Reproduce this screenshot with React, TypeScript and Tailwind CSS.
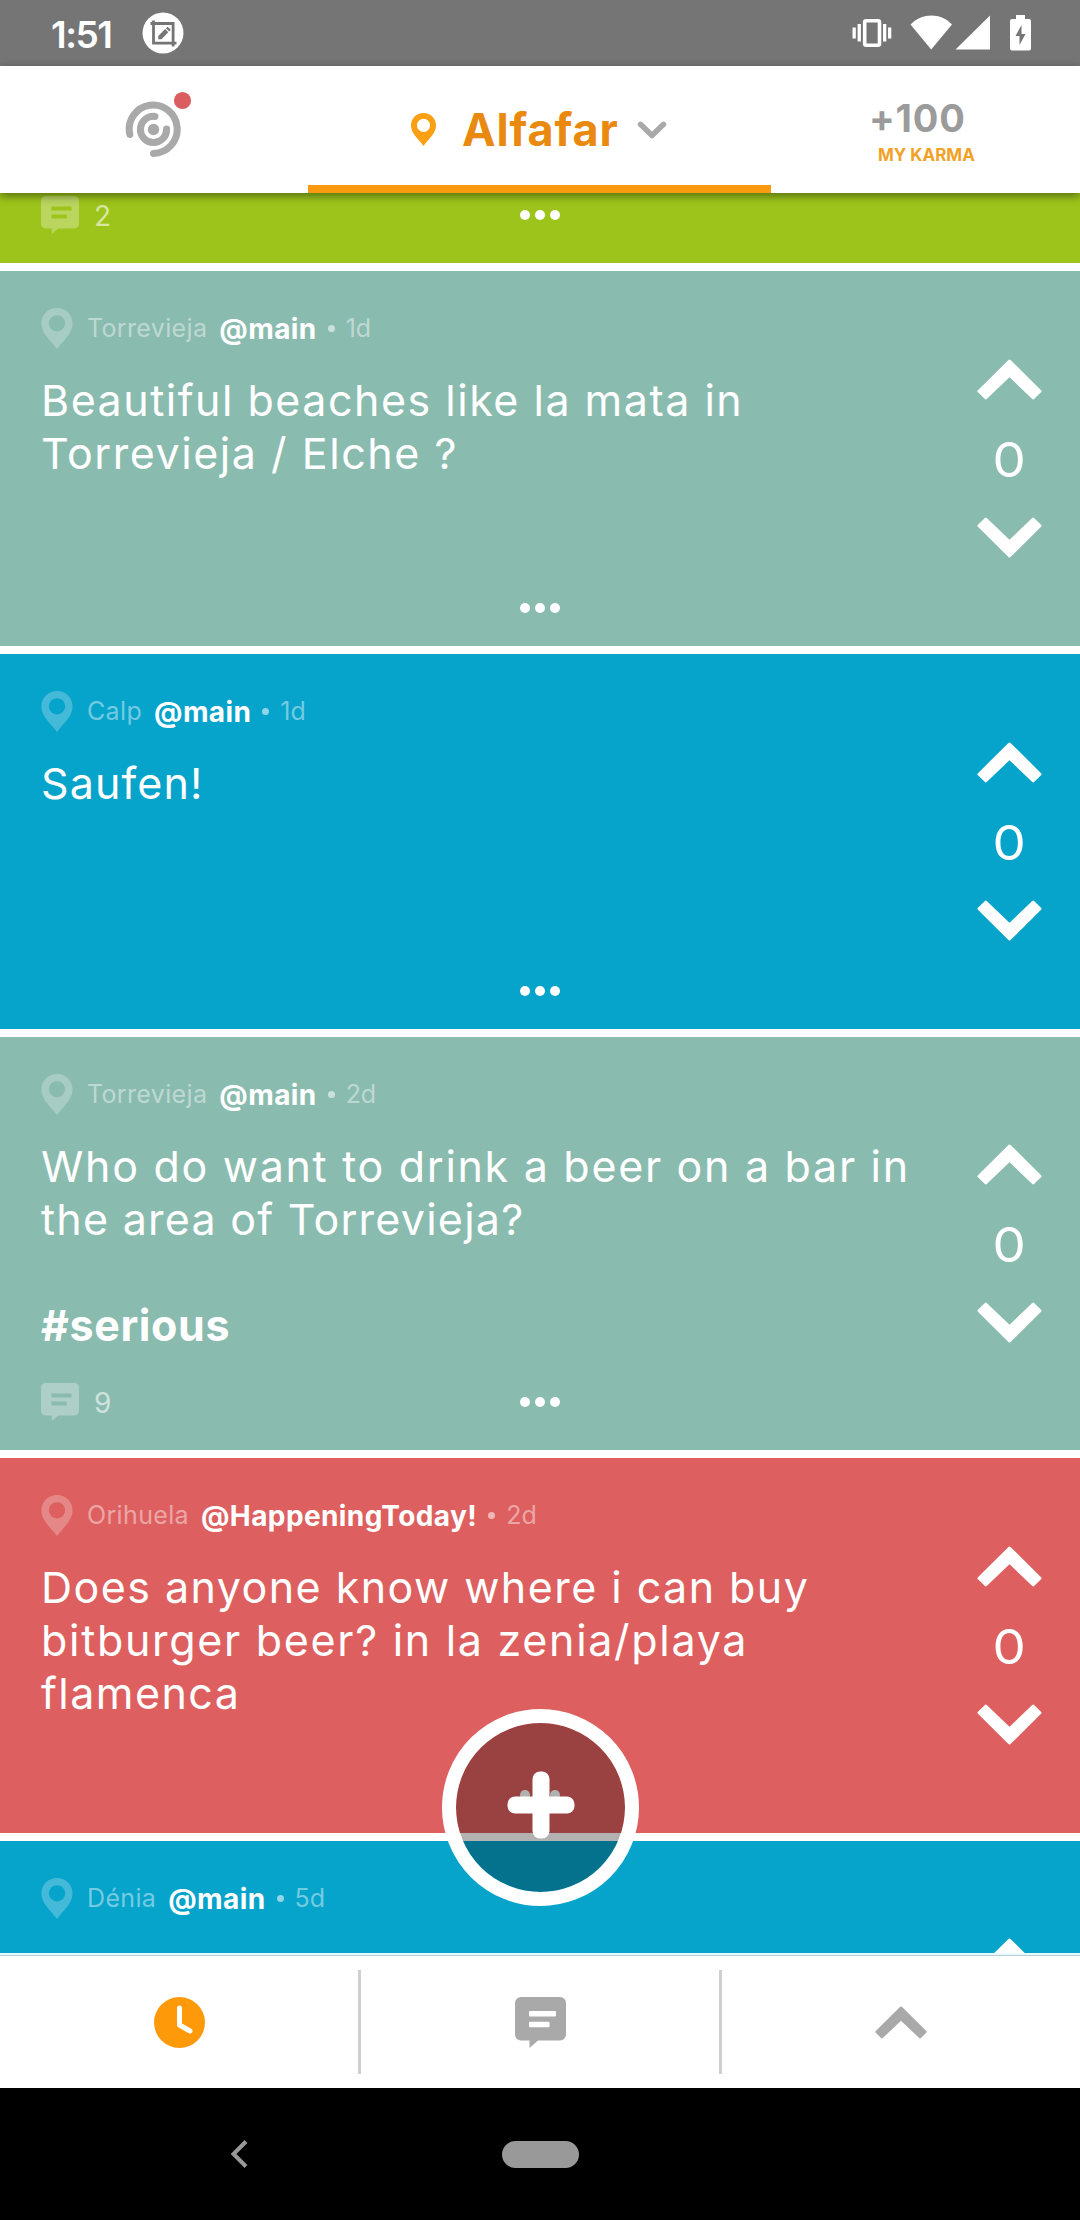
import clsx from "clsx";

type Line = { text: string; tracking: string; bold?: boolean };

type Post = {
  id: number;
  color: string;
  height: string;
  place?: string;
  channel?: string;
  age?: string;
  lines: Line[];
  replies?: number;
  votes?: number;
  canVote: boolean;
};

const posts: Post[] = [
  { id: 1, color: "bg-[#9dc41a]", height: "h-[70px]", lines: [], replies: 2, canVote: false },
  {
    id: 2,
    color: "bg-[#8abbaf]",
    height: "h-[375px]",
    place: "Torrevieja",
    channel: "@main",
    age: "1d",
    lines: [
      { text: "Beautiful beaches like la mata in", tracking: "tracking-[1.5px]" },
      { text: "Torrevieja / Elche ?", tracking: "tracking-[1.55px]" },
    ],
    votes: 0,
    canVote: true,
  },
  {
    id: 3,
    color: "bg-[#06a3cb]",
    height: "h-[375px]",
    place: "Calp",
    channel: "@main",
    age: "1d",
    lines: [{ text: "Saufen!", tracking: "tracking-[1.1px]" }],
    votes: 0,
    canVote: true,
  },
  {
    id: 4,
    color: "bg-[#8abbaf]",
    height: "h-[413px]",
    place: "Torrevieja",
    channel: "@main",
    age: "2d",
    lines: [
      { text: "Who do want to drink a beer on a bar in", tracking: "tracking-[1.7px]" },
      { text: "the area of Torrevieja?", tracking: "tracking-[1.25px]" },
      { text: "", tracking: "" },
      { text: "#serious", tracking: "tracking-[0.6px]", bold: true },
    ],
    replies: 9,
    votes: 0,
    canVote: true,
  },
  {
    id: 5,
    color: "bg-[#dd5f5f]",
    height: "h-[375px]",
    place: "Orihuela",
    channel: "@HappeningToday!",
    age: "2d",
    lines: [
      { text: "Does anyone know where i can buy", tracking: "tracking-[1.45px]" },
      { text: "bitburger beer? in la zenia/playa", tracking: "tracking-[1.7px]" },
      { text: "flamenca", tracking: "tracking-[1.45px]" },
    ],
    votes: 0,
    canVote: true,
  },
  {
    id: 6,
    color: "bg-[#06a3cb]",
    height: "h-[393px]",
    place: "Dénia",
    channel: "@main",
    age: "5d",
    lines: [],
    canVote: true,
  },
];

function Chevron({ className }: { className?: string }) {
  return (
    <svg viewBox="0 0 65 41" className={className} fill="currentColor" stroke="currentColor" strokeWidth="3" strokeLinejoin="round">
      <path d="M32.5 2 L63 32.2 L56.3 38.8 L32.5 16.2 L8.7 38.8 L2 32.2 Z" />
    </svg>
  );
}

function Pin({ className }: { className?: string }) {
  return (
    <svg viewBox="0 0 32 42" className={className} fill="currentColor" fillRule="evenodd">
      <path d="M16 0C7 0 0 7 0 16c0 9.500 8.500 16.500 16 26 7.500-9.500 16-16.500 16-26C32 7 25 0 16 0Zm0 7.300a8.400 8.400 0 1 1 0 16.800 8.400 8.400 0 0 1 0-16.800Z" />
    </svg>
  );
}

function Bubble({ className }: { className?: string }) {
  return (
    <svg viewBox="0 0 51 51" className={className} fill="currentColor" fillRule="evenodd">
      <path d="M6 0h39a6 6 0 0 1 6 6v31.500a6 6 0 0 1-6 6H23L14.500 51v-7.500H6a6 6 0 0 1-6-6V6a6 6 0 0 1 6-6Zm9 14a1 1 0 0 0-1 1v3.500a1 1 0 0 0 1 1h25a1 1 0 0 0 1-1V15a1 1 0 0 0-1-1Zm0 10.700a1 1 0 0 0-1 1v3.500a1 1 0 0 0 1 1h18.500a1 1 0 0 0 1-1v-3.500a1 1 0 0 0-1-1Z" />
    </svg>
  );
}

function StatusBar() {
  return (
    <div className="flex h-[66px] shrink-0 items-center bg-[#757575] pl-[51px] pr-[47px] text-white">
      <span className="w-[91px] pt-[3px] text-[37px] font-semibold leading-none tracking-[-1.5px]">1:51</span>
      <svg viewBox="0 0 42 42" className="h-[42px] w-[42px]" fill="none">
        <circle cx="21" cy="21" r="20.500" fill="#fff" />
        <g stroke="#757575" strokeWidth="2.800">
          <path d="M8.500 11.500h22.600v23M11.500 8.500v22.700h23" />
        </g>
        <path d="M16.300 27.200v-3.300l6.800-6.800 3.200 3.200-6.800 6.900ZM24 16.200l1.600-1.500 3.100 3.100-1.500 1.600Z" fill="#757575" />
      </svg>
      <svg viewBox="850 12 182 42" className="ml-auto h-[42px] w-[182px]" fill="#fff">
        <rect x="863.700" y="20.700" width="14.800" height="24.600" rx="1.500" fill="none" stroke="#fff" strokeWidth="3.600" />
        <path d="M851.500 27.500h3.300v11h-3.300zM856.600 24h3.300v17.500h-3.300zM882 24h3.300v17.500H882zM887 27.500h3.300v11H887z" />
        <path d="M909.500 24.500C921 12.500 940 12.500 951 24.500L930.200 49.500Z" />
        <path d="M989 15.500v34h-34.500Z" />
        <path fillRule="evenodd" d="M1015 15h9v4h4a2 2 0 0 1 2 2v27.500a2 2 0 0 1-2 2h-17a2 2 0 0 1-2-2V21a2 2 0 0 1 2-2h4ZM1020.500 25l-6 11h4v9l6-11h-4Z" />
      </svg>
    </div>
  );
}

function Header() {
  return (
    <header className="relative z-10 grid h-[127px] shrink-0 grid-cols-[308px_463px_309px] bg-white shadow-[0_3px_9px_rgba(0,0,0,0.45)]">
      <div className="pl-[124px] pt-[25px]">
        <svg viewBox="0 0 70 70" className="h-[70px] w-[70px]" fill="none" stroke="#a9a9a9" strokeWidth="7" strokeLinecap="round">
          <path d="M5.800 43.500A24 24.200 0 1 1 29.500 62.400" />
          <path d="M31 25.400A13.100 13.100 0 1 0 42.600 38" />
          <circle cx="29.500" cy="38.500" r="5.700" fill="#a9a9a9" stroke="none" />
          <circle cx="58.500" cy="9.500" r="8.600" fill="#da5e60" stroke="none" />
        </svg>
      </div>
      <div className="flex items-center border-b-8 border-[#fb9a0e] pl-[103px] pt-[8px]">
        <Pin className="h-[33px] w-[25px] text-[#fb9f13]" />
        <span className="ml-[26px] w-[175px] text-[45px] font-bold leading-none tracking-[0.9px] text-[#ea890f]">Alfafar</span>
        <svg viewBox="0 0 30 18" className="h-[18px] w-[30px]" fill="none" stroke="#a9a9a9" strokeWidth="5.500" strokeLinecap="round" strokeLinejoin="round">
          <path d="M3.500 3.300 15 14.500 26.500 3.300" />
        </svg>
      </div>
      <div className="flex flex-col pl-[98px] pt-[32px]">
        <span className="text-[38px] font-bold leading-[40px] tracking-[0.8px] text-[#9b9b9b]">+100</span>
        <span className="-mt-[1px] pl-[9px] text-[17px] font-bold leading-[36px] text-[#f2a127]">MY KARMA</span>
      </div>
    </header>
  );
}

function Votes({ count }: { count?: number }) {
  return (
    <div className="flex h-[199px] w-[142px] shrink-0 flex-col items-center justify-between self-center text-white">
      <Chevron className="h-[41px] w-[65px]" />
      <span className="h-[48px] scale-x-[1.1] text-[48px] font-normal leading-[49px]">{count}</span>
      <Chevron className="h-[41px] w-[65px] rotate-180" />
    </div>
  );
}

function PostCard({ post }: { post: Post }) {
  const hasReplies = post.replies !== undefined;
  return (
    <article className={clsx("flex shrink-0 overflow-hidden text-white", post.color, post.height)}>
      <div className="flex flex-1 flex-col pl-[41px]">
        {post.place && (
          <div className="mt-[37px] flex h-[41px] items-center whitespace-nowrap text-[25px] leading-none">
            <Pin className="h-[41px] w-[32px] text-white/25" />
            <span className="ml-[14px] tracking-[0.35px] text-white/45">{post.place}</span>
            <span className="ml-[12px] text-[28px] font-bold tracking-[0.4px]">{post.channel}</span>
            <span className="mx-[11px] h-[7px] w-[7px] rounded-full bg-white/55" />
            <span className="text-white/45">{post.age}</span>
          </div>
        )}
        {post.lines.length > 0 && (
          <div className="mt-[25px] text-[43px] leading-[53px]">
            {post.lines.map((line, i) => (
              <p key={i} className={clsx("h-[53px] whitespace-nowrap", line.tracking, line.bold && "font-bold")}>
                {line.text}
              </p>
            ))}
          </div>
        )}
        <div className={clsx("mt-auto flex h-[38px] items-center", hasReplies ? "mb-[29px]" : "mb-[19px]")}>
          <div className="flex w-[479px] items-center gap-[15px] text-[28px] text-white/60">
            {hasReplies && (
              <>
                <Bubble className="h-[38px] w-[38px] text-white/30" />
                <span className="pt-[2px]">{post.replies}</span>
              </>
            )}
          </div>
          <div className="flex gap-[5px]">
            <i className="h-[10px] w-[10px] rounded-full bg-white" />
            <i className="h-[10px] w-[10px] rounded-full bg-white" />
            <i className="h-[10px] w-[10px] rounded-full bg-white" />
          </div>
        </div>
      </div>
      {post.canVote && <Votes count={post.votes} />}
    </article>
  );
}

function TabBar() {
  return (
    <div className="shrink-0 bg-[#e8fafd] pt-[2px]">
      <nav className="grid h-[133px] grid-cols-[361px_361px_358px] items-center border-t border-[#b5cdd5] bg-white text-[#a9a9a9]">
        <div className="flex h-[104px] items-center justify-center border-r-[3px] border-[#cfcfcf]">
          <svg viewBox="0 0 51 51" className="h-[51px] w-[51px]" fill="none">
            <circle cx="25.500" cy="25.500" r="25.500" fill="#fe9a0a" />
            <path d="M25.500 11v17l10.500 6" stroke="#fff" strokeWidth="5" strokeLinecap="round" strokeLinejoin="round" />
          </svg>
        </div>
        <div className="flex h-[104px] items-center justify-center border-r-[3px] border-[#cfcfcf]">
          <Bubble className="h-[51px] w-[51px]" />
        </div>
        <div className="flex justify-center">
          <Chevron className="h-[33px] w-[52px]" />
        </div>
      </nav>
    </div>
  );
}

export default function App() {
  return (
    <div className="relative flex h-[2220px] w-[1080px] flex-col overflow-hidden bg-white font-['Inter',sans-serif]">
      <StatusBar />
      <Header />
      <main className="flex h-[1760px] shrink-0 flex-col gap-[8px] overflow-hidden">
        {posts.map((post) => (
          <PostCard key={post.id} post={post} />
        ))}
      </main>
      <TabBar />
      <footer className="flex h-[132px] shrink-0 items-center bg-black pl-[230px]">
        <svg viewBox="0 0 18 28" className="h-[28px] w-[18px]" fill="none" stroke="#999" strokeWidth="4">
          <path d="M16 1.500 3.500 14 16 26.500" />
        </svg>
        <span className="ml-[254px] h-[27px] w-[77px] rounded-full bg-[#999]" />
      </footer>

      <button className="absolute left-[442px] top-[1709px] flex h-[197px] w-[197px] items-center justify-center rounded-full border-[14px] border-white bg-black/30 bg-clip-padding">
        <svg viewBox="0 0 68 68" className="mb-[5px] h-[68px] w-[68px]" fill="#fff">
          <rect x="25.500" y="0.500" width="17" height="67" rx="7.500" />
          <rect x="0.500" y="25.500" width="67" height="17" rx="7.500" />
        </svg>
      </button>
    </div>
  );
}
